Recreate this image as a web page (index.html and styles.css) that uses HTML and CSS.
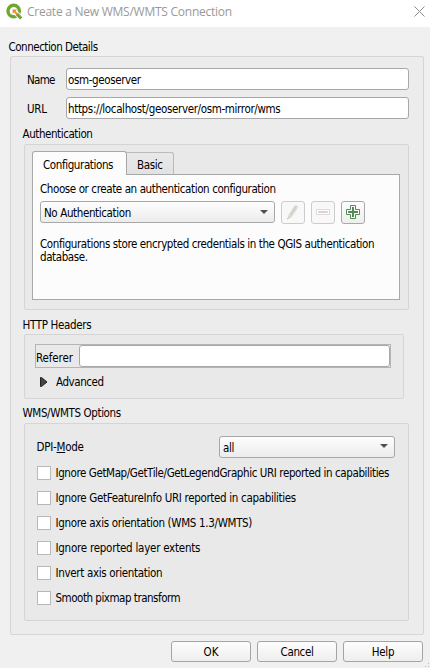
FILE: index.html
```html
<!DOCTYPE html>
<html lang="en">
<head>
<meta charset="utf-8">
<title>Create a New WMS/WMTS Connection</title>
<link rel="stylesheet" href="styles.css">
</head>
<body>
<div class="dialog">
  <header class="titlebar">
    <svg class="logo" width="16" height="17" viewBox="0 0 16 17">
      <circle cx="7.7" cy="8" r="5.700" fill="none" stroke="#6fa831" stroke-width="3.4"/>
      <path d="M8 8l7.2 7.2" stroke="#fff" stroke-width="4.800"/>
      <path d="M10.800 10.800l4.400 4.600" stroke="#6fa831" stroke-width="3.200"/>
      <path d="M6.600 6.600h4.200l-1.200 1.600 2.400 2.200-1.600 1.600-2.200-2.400-1.600 1.200z" fill="#ee8a3b"/>
    </svg>
    <h1 class="title">Create a New WMS/WMTS Connection</h1>
    <svg class="close" width="11" height="11" viewBox="0 0 11 11"><path d="M.5.5l10 10M10.500.5l-10 10" stroke="#8c8c8c" fill="none"/></svg>
  </header>
  <main class="body">
    <div class="label t22">Connection Details</div>
    <section class="group outer">
      <div class="field"><span class="name t40">Name</span><div class="input t13">osm-geoserver</div></div>
      <div class="field"><span class="name">URL</span><div class="input t10">https://localhost/geoserver/osm-mirror/wms</div></div>

      <div class="label sub t19">Authentication</div>
      <section class="group auth">
        <div class="tabs"><div class="tab active t12">Configurations</div><div class="tab t13">Basic</div></div>
        <div class="pane">
          <div class="choose t16">Choose or create an authentication configuration</div>
          <div class="row">
            <div class="combo wide t13">No Authentication<i class="arrow"></i></div>
            <div class="tool off"><svg width="22" height="21" viewBox="0 0 22 21"><path d="M5.500 17.500l1-4.500 6-9.500 1.500-.5 2 1.500-.5 2-6 9z" fill="#dcdcd6"/><path d="M8.500 13l5.500-8.500M5.500 17.500l1-3" stroke="#cacac2" fill="none"/></svg></div>
            <div class="tool off"><svg width="22" height="21" viewBox="0 0 22 21"><path d="M4.500 7.500h13v5h-13z" fill="#fdfdfd" stroke="#e1d8d8"/><path d="M6.500 9.500h9v1h-9z" fill="none" stroke="#ddd1d1"/></svg></div>
            <div class="tool"><svg width="22" height="21" viewBox="0 0 22 21"><path d="M8.500 3.500h5v4h4v5h-4v4h-5v-4h-4v-5h4z" fill="#fff" stroke="#548b54"/><path d="M10 5h2v4h4v2h-4v4h-2v-4H6V9h4z" fill="#548b54"/></svg></div>
          </div>
          <div class="note t16">Configurations store encrypted credentials in the QGIS authentication<br>database.</div>
        </div>
      </section>

      <div class="label sub http-label t05">HTTP Headers</div>
      <section class="group http">
        <div class="referer"><span class="ref-name">Referer</span><div class="input"></div></div>
        <div class="advanced"><svg width="8" height="10" viewBox="0 0 8 10"><path d="M.5.500v9h1l5.500-4.500-5.500-4.500z" fill="#444" stroke="#222"/></svg><span class="t17">Advanced</span></div>
      </section>

      <div class="label sub wms-label t12">WMS/WMTS Options</div>
      <section class="group options">
        <div class="dpi"><span>DPI-<u>M</u>ode</span><div class="combo t13">all<i class="arrow"></i></div></div>
        <div class="check"><i></i><span class="t16">Ignore GetMap/GetTile/GetLegendGraphic URI reported in capabilities</span></div>
        <div class="check"><i></i><span class="t05">Ignore GetFeatureInfo URI reported in capabilities</span></div>
        <div class="check"><i></i><span class="t05">Ignore axis orientation (WMS 1.3/WMTS)</span></div>
        <div class="check"><i></i><span>Ignore reported layer extents</span></div>
        <div class="check"><i></i><span class="t05">Invert axis orientation</span></div>
        <div class="check"><i></i><span class="t22">Smooth pixmap transform</span></div>
      </section>
    </section>
    <footer class="actions"><div class="button ok">OK</div><div class="button t10">Cancel</div><div class="button">Help</div></footer>
  </main>
  <svg class="grip" width="5" height="5" viewBox="0 0 5 5"><path d="M3 0h1v1H3zM0 3h1v1H0zM3 3h1v1H3z" fill="#bbb"/></svg>
</div>
</body>
</html>
```
FILE: styles.css
```css
* { box-sizing: border-box; }
body { margin: 0; background: #f0f0f0; color: #000; font: 11.5px/14px "DejaVu Sans Condensed", "DejaVu Sans", sans-serif; font-stretch: condensed; letter-spacing: -.25px; white-space: nowrap; }
.dialog { width: 430px; height: 668px; overflow: hidden; position: relative; }
.titlebar { height: 27px; background: #fff; display: flex; align-items: flex-start; padding: 3px 5px 0 6px; }
.logo { display: block; flex: none; }
.title { margin: 1px 0 0 5px; flex: 1; font: 400 12px/16px "Open Sans", sans-serif; letter-spacing: -.25px; color: #999; }
.close { display: block; margin-top: 3px; }
.body { padding: 13px 7px 0 8px; }
.label { height: 14px; margin-left: .5px; }
.group { border: 1px solid #d5d5d5; border-radius: 2px; }
.outer { margin: 2px 0 0 2px; height: 579px; width: 414px; background: #ececec; padding: 11px 14px 0 13px; }
.field { display: flex; align-items: center; height: 22px; margin-bottom: 7px; padding-left: 3px; }
.name { width: 39px; padding-top: 2px; }
.input { flex: 1; height: 22px; border: 1px solid #a8a8a8; border-radius: 3px; background: #fff; padding: 4px 0 0 1px; line-height: 15px; }
.sub { margin: 8px 0 3px -1.5px; }
.auth { height: 166px; background: #e9e9e9; padding: 6px 8px 0 7px; }
.tabs { display: flex; align-items: flex-end; height: 24px; margin-bottom: -1px; }
.tab { height: 22px; width: 47px; margin-bottom: 1px; border: 1px solid #bababa; border-left: 0; border-bottom: 0; border-radius: 0 3px 0 0; background: linear-gradient(#e9e9e9, #e2e2e2); padding: 5px 0 0 10px; }
.tab.active { width: 95px; height: 24px; margin: 0; border: 1px solid #a8a8a8; border-bottom: 0; border-radius: 3px 3px 0 0; background: #fcfcfc; position: relative; padding: 6px 0 0 10px; }
.pane { height: 126px; border: 1px solid #a8a8a8; background: #fcfcfc; padding: 7px 7px 0; }
.choose { height: 19px; line-height: 15px; }
.row { display: flex; gap: 6px; height: 24px; }
.combo { width: 176px; height: 22px; border: 1px solid #a8a8a8; border-radius: 3px; background: linear-gradient(#fdfdfd, #ececec); display: flex; justify-content: space-between; align-items: center; padding: 2px 6px 0 3px; }
.wide { width: 235px; }
.arrow { border: 4px solid transparent; border-top-color: #505050; border-bottom: 0; margin-top: -3px; }
.tool { width: 24px; height: 23px; border: 1px solid #a8a8a8; border-radius: 3px; background: linear-gradient(#fdfdfd, #eee); }
.tool svg { display: block; }
.off { border-color: #ccc; background: #f8f8f8; }
.note { margin-top: 13px; line-height: 13px; }
.http-label { margin-top: 8px; margin-bottom: 2px; }
.http { width: 380px; height: 65px; margin-left: 0; background: #e9e9e9; padding: 9px 12px 0 10px; }
.referer { display: flex; align-items: center; height: 24px; border: 1px solid #b5b5b5; }
.ref-name { width: 43px; padding-top: 3px; letter-spacing: -.12px; }
.advanced { display: flex; align-items: center; gap: 8px; margin: 7px 0 0 5px; }
.wms-label { margin-top: 7px; }
.options { height: 198px; background: #e9e9e9; padding: 11px 13px 0 12px; }
.dpi { display: flex; justify-content: space-between; align-items: center; height: 23px; margin-bottom: 2px; margin-left: -.5px; }
.check { display: flex; align-items: center; gap: 4.5px; height: 25px; }
.check i { width: 14px; height: 14px; border: 1px solid #b8b8b8; background: #fff; }
.actions { display: flex; justify-content: flex-end; gap: 6px; margin-top: 6px; }
.button { width: 80px; height: 21px; border: 1px solid #a4a4a4; border-radius: 3px; background: linear-gradient(#fdfdfd, #eee); text-align: center; line-height: 21px; }
.ok { letter-spacing: 0; }
.grip { position: absolute; right: 0; bottom: 0; }
.t05 { letter-spacing: -.33px; }
.t10 { letter-spacing: -.35px; }
.t12 { letter-spacing: -.39px; }
.t13 { letter-spacing: -.38px; }
.t16 { letter-spacing: -.4px; }
.t17 { letter-spacing: -.43px; }
.t19 { letter-spacing: -.43px; }
.t22 { letter-spacing: -.48px; }
.t40 { letter-spacing: -.7px; }
```
